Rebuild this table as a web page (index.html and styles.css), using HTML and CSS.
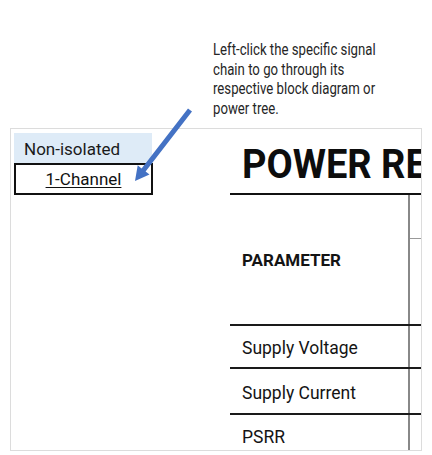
FILE: index.html
```html
<!DOCTYPE html>
<html>
<head>
<meta charset="utf-8">
<link rel="stylesheet" href="styles.css">
</head>
<body>
<div class="page">
  <p class="note"><span class="narrow">Left-click the specific signal<br>chain to go through its<br>respective block diagram or<br>power tree.</span></p>
  <div class="sheet">
    <div class="nav">
      <div class="cell-blue">Non-isolated</div>
      <div class="cell-link"><a href="#">1-Channel</a></div>
    </div>
    <div class="report">
      <h1 class="title"><span class="narrow">POWER REQUIREMENTS</span></h1>
      <div class="row row-head">
        <div class="label label-bold">PARAMETER</div>
        <div class="val"><div class="subhead"></div></div>
      </div>
      <div class="row row-a">
        <div class="label">Supply Voltage</div>
        <div class="val"></div>
      </div>
      <div class="row row-b">
        <div class="label">Supply Current</div>
        <div class="val"></div>
      </div>
      <div class="row row-c">
        <div class="label">PSRR</div>
        <div class="val"></div>
      </div>
    </div>
  </div>
  <svg class="arrow" width="432" height="455" viewBox="0 0 432 455">
    <polygon points="188.0,108.5 141.6,168.4 137.7,165.3 135,181 149.5,174.5 145.6,171.5 192.0,111.5" fill="#4472C4"/>
  </svg>
</div>
</body>
</html>
```
FILE: styles.css
```css
html, body {
  margin: 0;
  padding: 0;
  background: #ffffff;
}
.page {
  position: relative;
  width: 432px;
  height: 455px;
  overflow: hidden;
  font-family: Roboto, "Liberation Sans", sans-serif;
  color: #111;
}
.narrow {
  display: inline-block;
  transform-origin: left center;
  white-space: nowrap;
}
.note {
  margin: 40px 0 10px 213px;
  font-size: 16.5px;
  line-height: 19.5px;
  color: #262626;
}
.note .narrow {
  transform: scaleX(0.8);
}
.sheet {
  margin-left: 10px;
  width: 412px;
  height: 323px;
  box-sizing: border-box;
  border: 1px solid #dcdcdc;
  display: grid;
  grid-template-columns: 219px 1fr;
  overflow: hidden;
}
.nav {
  padding: 4px 0 0 3px;
}
.cell-blue {
  width: 138px;
  height: 30px;
  background: #deebf7;
  box-sizing: border-box;
  padding-left: 10px;
  font-size: 17px;
  line-height: 32px;
  color: #1a1a1a;
}
.cell-link {
  width: 139px;
  height: 32px;
  box-sizing: border-box;
  border: 2px solid #111;
  text-align: center;
  font-size: 17px;
  line-height: 29px;
}
.cell-link a {
  color: #111;
  text-decoration: underline;
  text-underline-offset: 2px;
}
.report {
  min-width: 0;
  overflow: hidden;
}
.title {
  margin: 0;
  padding: 8px 0 0 12px;
  font-weight: bold;
  font-size: 40px;
  line-height: 56px;
  white-space: nowrap;
  border-bottom: 2px solid #111;
  color: #0d0d0d;
}
.title .narrow {
  transform: scaleX(0.95);
}
.row {
  display: flex;
  border-top: 2px solid #1a1a1a;
}
.row-head {
  border-top: none;
  height: 129px;
}
.row-a { height: 41px; }
.row-b { height: 44px; }
.row-c { height: 40px; }
.label {
  width: 180px;
  flex: none;
  box-sizing: border-box;
  padding-left: 12px;
  border-right: 2px solid #888;
  display: flex;
  align-items: center;
  font-size: 17.5px;
  color: #141414;
  white-space: nowrap;
}
.row-a .label, .row-b .label, .row-c .label { padding-top: 3px; }
.label-bold {
  font-weight: bold;
  font-size: 17px;
}
.val {
  flex: 1;
}
.subhead {
  height: 43px;
  border-bottom: 1px solid #999;
}
.arrow {
  position: absolute;
  left: 0;
  top: 0;
  pointer-events: none;
}
```
